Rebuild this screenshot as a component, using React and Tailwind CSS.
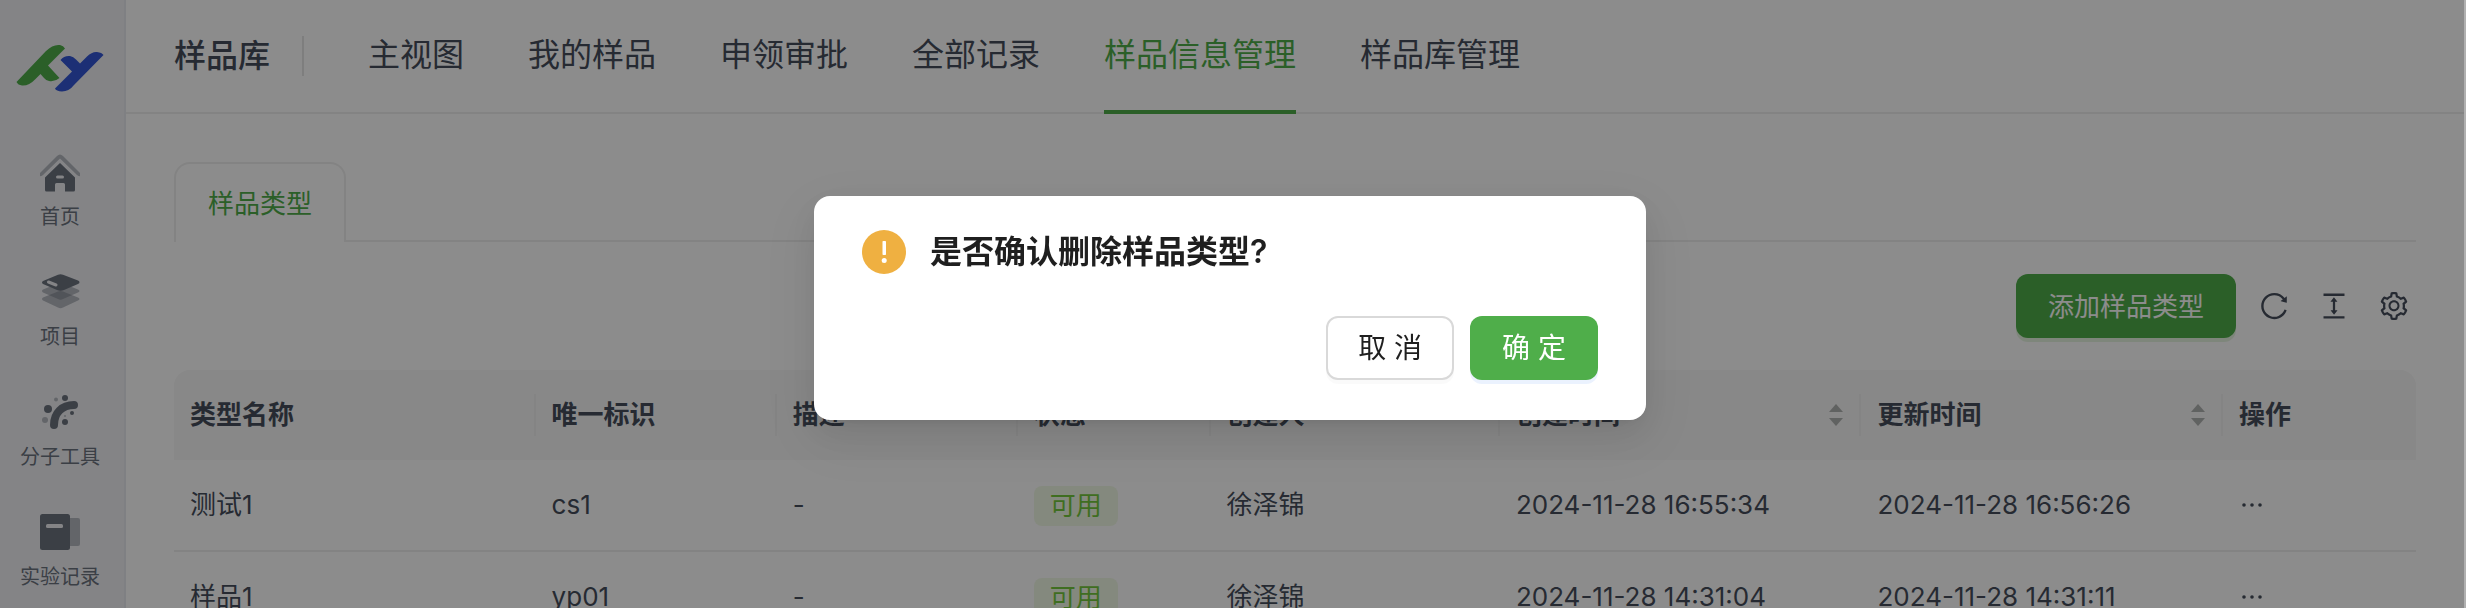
import React, { useState } from 'react';
import { AiOutlineReload, AiOutlineColumnHeight, AiOutlineSetting } from 'react-icons/ai';

const Logo = () => (
  <svg viewBox="0 0 88 48" className="w-22 h-12" aria-hidden="true">
    <path d="M0.5 38 L30 7 Q37 0 44 1 Q47.500 1.500 49 4.500 L32 21.500 L43.500 34 Q39 38 33 37 Q30 36.500 28 34 L24.500 30 L19 35.500 Q13 42 6 41.500 Q2 41 0.500 38Z" fill="#4fae4a" />
    <path d="M44.500 16 Q48 11.500 54 12 Q57.500 12.500 60 15.500 L64 19.500 L71 12.500 Q76 7.500 81 8 Q86 8.500 87.500 11 L58 41 Q53 47.500 46 47.500 Q40 47 39 44.500 L56 27.500Z" fill="#3457d5" />
  </svg>
);

const HomeIcon = () => (
  <svg viewBox="0 -2 40 40" className="w-10 h-10" aria-hidden="true">
    <path d="M0 22 V19 L17 2 Q20 -1 23 2 L40 19 V22 Q38.500 22.500 37 21 L20 4.500 L3 21 Q1.500 22.500 0 22Z" fill="#6c737f" opacity="0.45" />
    <path d="M20 9 L35 23.500 V36 Q35 37.500 33.500 37.500 H25 V30.500 Q25 29 23.500 29 H16.500 Q15 29 15 30.500 V37.500 H6.500 Q5 37.500 5 36 V23.500Z" fill="#6c737f" />
    <rect x="16" y="21.500" width="8" height="3" rx="1.500" fill="#f0f1f5" />
  </svg>
);

const LayersIcon = () => (
  <svg viewBox="0 -2 40 40" className="w-10 h-10" aria-hidden="true">
    <path d="M3 26.500 Q1 25 3 23.500 L18 17.500 Q20.500 16.500 23 17.500 L38 23.500 Q41 25 38 26.500 L23 33.500 Q20.500 35 18 33.500Z" fill="#6c737f" opacity="0.45" />
    <path d="M3 18.500 Q1 17 3 15.500 L18 9.500 H23 L38 15.500 Q41 17 38 18.500 L23 25 Q20.500 26.500 18 25Z" fill="#6c737f" opacity="0.45" />
    <path d="M3 7 L18 0.800 Q20.500 -0.500 23 0.800 L38 6.500 Q41 8 38 10 L24 16 Q20.500 17.500 17 16 L3 10 Q1 8.500 3 7Z" fill="#6c737f" />
    <path d="M8.500 8 L16 11" stroke="#f0f1f5" strokeWidth="3" strokeLinecap="round" />
  </svg>
);

const MoleculeIcon = () => (
  <svg viewBox="0 0 40 40" className="w-10 h-10" aria-hidden="true">
    <path d="M14 33 C14 21 22 13 34 13" fill="none" stroke="#6c737f" strokeWidth="8" strokeLinecap="round" />
    <circle cx="8" cy="17" r="4" fill="#6c737f" />
    <circle cx="25" cy="6" r="3" fill="#6c737f" />
    <circle cx="25" cy="30" r="3" fill="#6c737f" />
    <circle cx="32" cy="21" r="2" fill="#6c737f" />
    <circle cx="16" cy="7.500" r="2" fill="#6c737f" opacity="0.45" />
    <circle cx="5" cy="28" r="3" fill="#6c737f" opacity="0.45" />
    <circle cx="25" cy="24" r="1" fill="#6c737f" opacity="0.45" />
  </svg>
);

const NotebookIcon = () => (
  <svg viewBox="0 0 40 40" className="w-10 h-10" aria-hidden="true">
    <path d="M30 6 H38 Q40 6 40 8 V32 Q40 34 38 34 H30Z" fill="#6c737f" opacity="0.45" />
    <rect x="0" y="2" width="30" height="36" rx="2.500" fill="#6c737f" />
    <rect x="6" y="12" width="17" height="4" rx="1.500" fill="#f0f1f5" />
  </svg>
);

const sideItems = [
  { label: '首页', icon: HomeIcon },
  { label: '项目', icon: LayersIcon },
  { label: '分子工具', icon: MoleculeIcon },
  { label: '实验记录', icon: NotebookIcon },
];

const navItems = ['主视图', '我的样品', '申领审批', '全部记录', '样品信息管理', '样品库管理'];

const columns = [
  { title: '类型名称', width: 'w-[300px]' },
  { title: '唯一标识', width: 'w-[200px]' },
  { title: '描述', width: 'w-[200px]' },
  { title: '状态', width: 'w-[160px]' },
  { title: '创建人', width: 'w-[240px]' },
  { title: '创建时间', width: 'w-[300px]', sortable: true },
  { title: '更新时间', width: 'w-[300px]', sortable: true },
  { title: '操作', width: 'w-[160px]' },
];

const rows = [
  { name: '测试1', code: 'cs1', desc: '-', status: '可用', creator: '徐泽锦', created: '2024-11-28 16:55:34', updated: '2024-11-28 16:56:26' },
  { name: '样品1', code: 'yp01', desc: '-', status: '可用', creator: '徐泽锦', created: '2024-11-28 14:31:04', updated: '2024-11-28 14:31:11' },
];

const Sorter = () => (
  <svg viewBox="0 0 14 22" className="w-3.5 h-[22px]" aria-hidden="true">
    <path d="M7 0 L14 8 H0Z M7 22 L14 14 H0Z" fill="#b0b2b1" />
  </svg>
);

const ConfirmDialog = ({ onClose }) => (
  <div className="fixed inset-y-0 left-0 right-0.5 z-10 flex items-start justify-center bg-black/45 pt-[196px] pr-1">
    <div
      role="dialog"
      aria-modal="true"
      aria-labelledby="confirm-title"
      className="w-[832px] rounded-2xl bg-white px-12 pt-8 pb-10 shadow-[0_12px_32px_0_rgba(0,0,0,0.08),0_6px_12px_-8px_rgba(0,0,0,0.12),0_18px_56px_16px_rgba(0,0,0,0.05)]"
    >
      <div className="flex items-center gap-6">
        <svg viewBox="0 0 44 44" className="w-11 h-11" aria-hidden="true">
          <circle cx="22" cy="22" r="22" fill="#efb041" />
          <rect x="20.500" y="11" width="3.500" height="14" rx="0.800" fill="#fff" />
          <circle cx="22.200" cy="30.500" r="2.500" fill="#fff" />
        </svg>
        <h2 id="confirm-title" className="text-[32px] leading-12 font-semibold text-[#1f1f1f]">是否确认删除样品类型?</h2>
      </div>
      <div className="mt-10 flex justify-end gap-4">
        <button
          type="button"
          onClick={onClose}
          className="h-16 rounded-xl border-2 border-[#d9d9d9] bg-white px-[30px] text-[28px] text-[#1f1f1f] shadow-[0_4px_0_rgba(0,0,0,0.02)]"
        >
          取 消
        </button>
        <button
          type="button"
          onClick={onClose}
          className="h-16 rounded-xl bg-[#4fae4a] px-8 text-[28px] text-white shadow-[0_4px_0_#ebf2fe]"
        >
          确 定
        </button>
      </div>
    </div>
  </div>
);

const App = () => {
  const [open, setOpen] = useState(true);

  return (
    <div className="h-screen overflow-hidden border-r-2 border-[#b0b0b0] bg-white font-['Inter','Noto_Sans_CJK_SC',sans-serif] text-[#464e5c]">
      <div className="flex h-full">
        {/* Sidebar */}
        <aside className="w-[126px] shrink-0 border-r-2 border-[#e8e9ee] bg-[#f0f1f5] pr-1 pt-11">
          <a href="#home" aria-label="首页" className="flex justify-center">
            <Logo />
          </a>
          <nav className="mt-15 flex flex-col gap-10">
            {sideItems.map(({ label, icon: Icon }) => (
              <a key={label} href="#menu" className="flex h-20 flex-col items-center gap-2.5 text-xl leading-[30px] text-[#6c737f]">
                <Icon />
                {label}
              </a>
            ))}
          </nav>
        </aside>

        <div className="min-w-0 flex-1">
          {/* Top navigation */}
          <header className="flex h-[114px] border-b-2 border-[#efefef] pl-12">
            <div className="mr-16 flex h-28 items-center gap-8">
              <h1 className="text-[32px] leading-12 font-medium">样品库</h1>
              <span className="h-10 w-0.5 bg-[#e6e6e6]" />
            </div>
            <nav className="flex gap-16 text-[32px]">
              {navItems.map(item => (
                <a
                  key={item}
                  href="#nav"
                  className={
                    item === '样品信息管理'
                      ? 'flex h-[114px] items-center border-b-4 border-[#4fae4a] text-[#4fae4a]'
                      : 'flex h-[114px] items-center border-b-4 border-transparent'
                  }
                >
                  {item}
                </a>
              ))}
            </nav>
          </header>

          <main className="px-12 pt-12">
            {/* Tabs */}
            <div className="flex h-20" role="tablist">
              <button
                type="button"
                role="tab"
                aria-selected="true"
                className="rounded-t-2xl border-2 border-b-0 border-[#efefef] px-8 text-[26px] text-[#4fae4a]"
              >
                样品类型
              </button>
              <div className="flex-1 border-b-2 border-[#efefef]" />
            </div>

            {/* Toolbar */}
            <div className="mt-8 flex items-center justify-end gap-4">
              <button type="button" className="h-16 rounded-xl bg-[#4fae4a] px-8 text-[26px] text-white shadow-[0_4px_0_#e6f5e1]">
                添加样品类型
              </button>
              <button type="button" aria-label="刷新" className="flex h-11 w-11 items-center justify-center">
                <AiOutlineReload size={32} />
              </button>
              <button type="button" aria-label="密度" className="flex h-11 w-11 items-center justify-center">
                <AiOutlineColumnHeight size={32} />
              </button>
              <button type="button" aria-label="列设置" className="flex h-11 w-11 items-center justify-center">
                <AiOutlineSetting size={32} />
              </button>
            </div>

            {/* Sample types */}
            <table className="mt-8 w-full table-fixed border-separate border-spacing-0 text-left text-[26px] leading-10">
              <thead>
                <tr>
                  {columns.map((col, i) => (
                    <th
                      key={col.title}
                      className={`${col.width} h-[90px] bg-[#f7f7f7] p-0 font-semibold first:rounded-tl-2xl last:rounded-tr-2xl`}
                    >
                      <div className="flex items-center">
                        <span className="flex-1 pl-4">{col.title}</span>
                        {col.sortable && <span className="mr-4"><Sorter /></span>}
                        <span className={i < columns.length - 1 ? 'h-[42px] w-0.5 bg-[#f0f0f0]' : 'h-[42px] w-0.5'} />
                      </div>
                    </th>
                  ))}
                </tr>
              </thead>
              <tbody>
                {rows.map(row => (
                  <tr key={row.name} className="[&>td]:h-[92px] [&>td]:border-b-2 [&>td]:border-[#efefef] [&>td]:px-4">
                    <td>{row.name}</td>
                    <td>{row.code}</td>
                    <td>{row.desc}</td>
                    <td>
                      <span className="inline-block rounded-lg bg-[#f1fae6] px-4 align-middle text-[#74c83c]">{row.status}</span>
                    </td>
                    <td>{row.creator}</td>
                    <td>{row.created}</td>
                    <td>{row.updated}</td>
                    <td>
                      <button type="button" aria-label="更多操作" className="block">
                        <svg viewBox="0 0 26 26" className="w-[26px] h-[26px]" aria-hidden="true">
                          <circle cx="5" cy="13" r="1.800" fill="currentColor" />
                          <circle cx="13" cy="13" r="1.800" fill="currentColor" />
                          <circle cx="21" cy="13" r="1.800" fill="currentColor" />
                        </svg>
                      </button>
                    </td>
                  </tr>
                ))}
              </tbody>
            </table>
          </main>
        </div>
      </div>

      {open && <ConfirmDialog onClose={() => setOpen(false)} />}
    </div>
  );
};

export default App;
